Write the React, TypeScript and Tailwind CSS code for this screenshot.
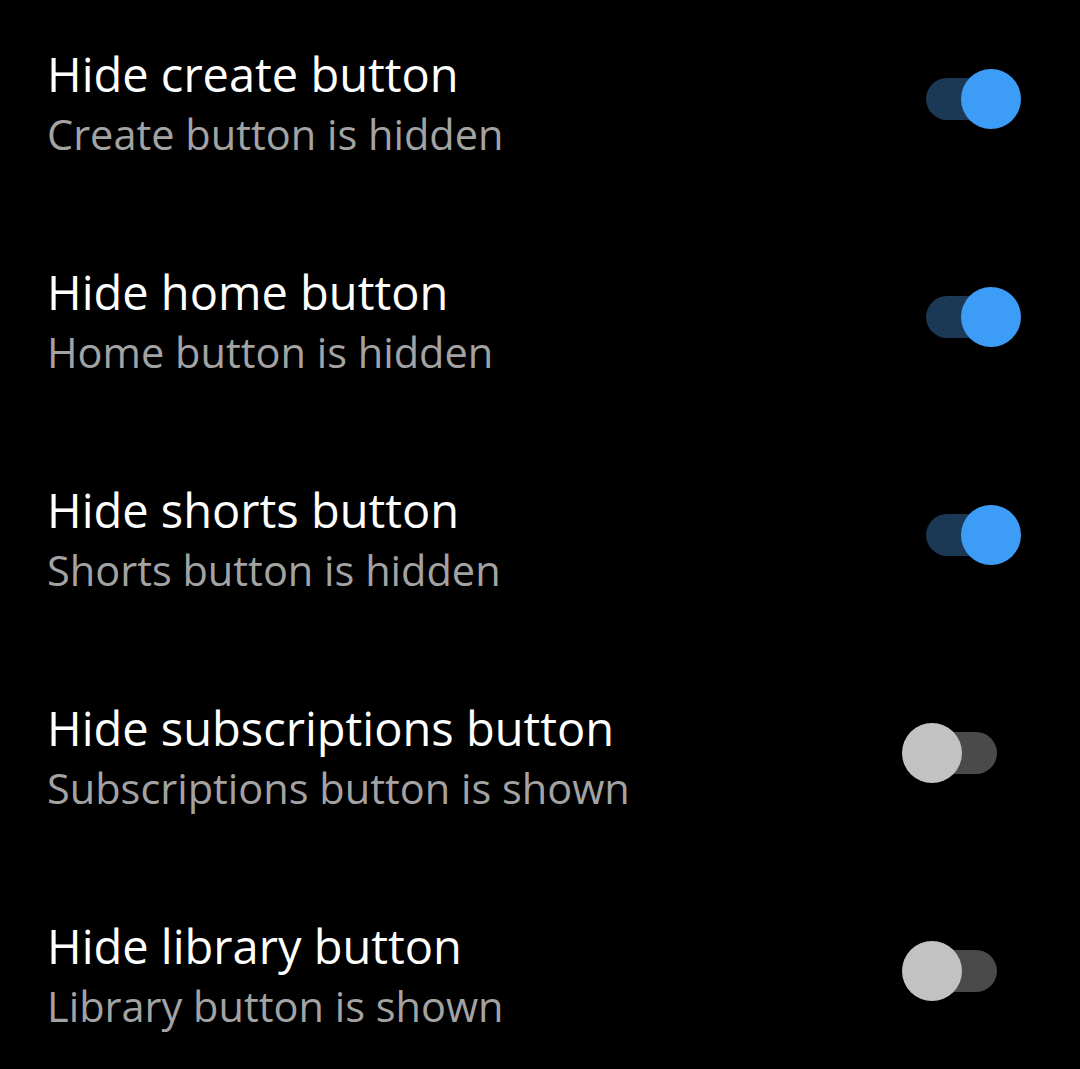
const rows = [
  { title: "Hide create button", subtitle: "Create button is hidden", on: true },
  { title: "Hide home button", subtitle: "Home button is hidden", on: true },
  { title: "Hide shorts button", subtitle: "Shorts button is hidden", on: true },
  { title: "Hide subscriptions button", subtitle: "Subscriptions button is shown", on: false },
  { title: "Hide library button", subtitle: "Library button is shown", on: false },
];

const Toggle = ({ on }: { on: boolean }) => (
  <div className="relative w-[119px] h-[60px] shrink-0 mt-[26px]">
    <div
      className={`absolute left-[24px] top-[9px] w-[71px] h-[42px] rounded-full ${
        on ? "bg-[#1b3854]" : "bg-[#4a4a4a]"
      }`}
    />
    <div
      className={`absolute top-0 w-[60px] h-[60px] rounded-full ${
        on ? "left-[59px] bg-[#3d9df6]" : "left-0 bg-[#c2c2c2]"
      }`}
    />
  </div>
);

export default function App() {
  return (
    <div
      className="w-[1080px] h-[1069px] bg-black overflow-hidden pt-[43px] pl-[47px] pr-[59px]"
      style={{ fontFamily: '"Open Sans", Roboto, sans-serif' }}
    >
      {rows.map((row) => (
        <div key={row.title} className="flex items-start justify-between h-[218px]">
          <div className="flex flex-col">
            <div className="text-[47px] leading-[62px] text-white">{row.title}</div>
            <div className="text-[41.5px] leading-[58px] text-[#a3a3a3]">{row.subtitle}</div>
          </div>
          <Toggle on={row.on} />
        </div>
      ))}
    </div>
  );
}
